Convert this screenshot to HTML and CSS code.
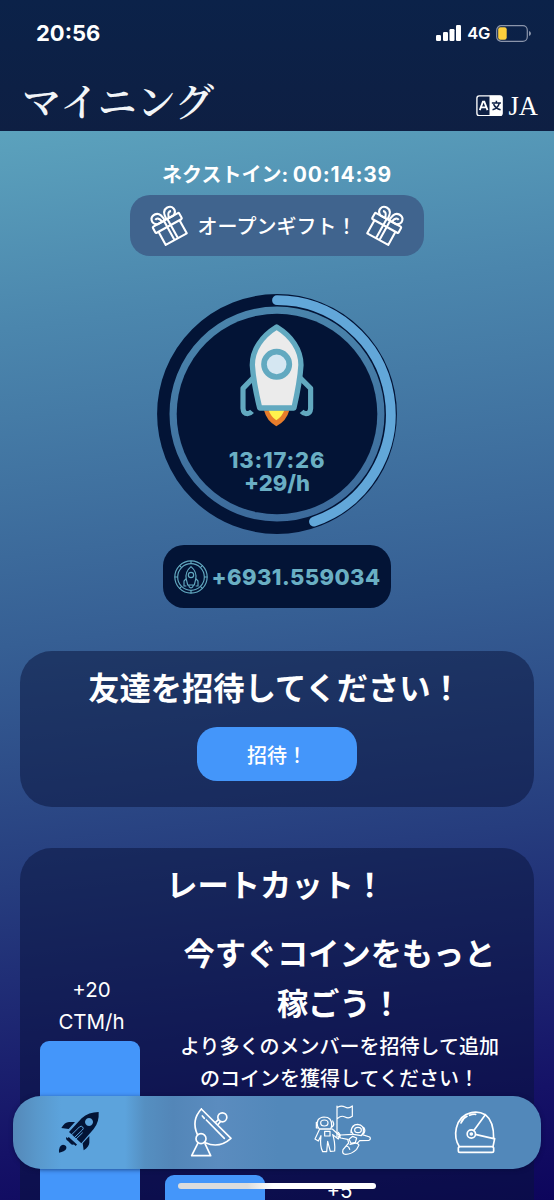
FILE: index.html
```html
<!DOCTYPE html>
<html lang="ja">
<head>
<meta charset="utf-8">
<title>マイニング</title>
<link rel="stylesheet" href="styles.css">
</head>
<body>
<div class="app">
  <header class="header">
    <div class="status">
      <span class="clock">20:56</span>
      <div class="status-right">
        <svg class="signal" viewBox="0 0 26 16"><rect x="0" y="10" width="5" height="6" rx="1.2"/><rect x="7" y="7" width="5" height="9" rx="1.2"/><rect x="13.500" y="4" width="5" height="12" rx="1.2"/><rect x="20" y="0" width="5" height="16" rx="1.2"/></svg>
        <span class="network">4G</span>
        <svg class="battery" viewBox="0 0 36 17"><rect x=".7" y=".7" width="30.600" height="15.600" rx="4.500" fill="none" stroke="#8b95ab" stroke-width="1.200"/><rect x="2.200" y="2.300" width="8.500" height="12.400" rx="2.200" fill="#fdcf3c"/><path d="M33 6q2 .8 2 2.500T33 11z" fill="#8b95ab"/></svg>
      </div>
    </div>
    <div class="titlebar">
      <h1 class="page-title">マイニング</h1>
      <div class="language">
        <svg class="language-icon" viewBox="0 0 80 64"><rect x="2.500" y="2.500" width="75" height="59" rx="7" fill="none" stroke="#fff" stroke-width="4"/><path d="M40 2h32q6 0 6 6v48q0 6-6 6H40z" fill="#fff"/><path d="M11 45l9.500-25h4L34 45M14.500 37h16" fill="none" stroke="#fff" stroke-width="5.500"/><path d="M47 24h27M60.500 17v7M69 25q-4 15-20 19M52 27q6 13 21 17" fill="none" stroke="#0d2046" stroke-width="4.500"/></svg>
        <span>JA</span>
      </div>
    </div>
  </header>

  <main class="content">
    <p class="countdown">ネクストイン: <span class="countdown-time">00:14:39</span></p>
    <button class="gift-button">
      <svg class="gift gift-left" viewBox="0 0 40 40"><g class="gift-lines"><rect x="5" y="13" width="30" height="7" rx="1"/><path d="M8 20v15h24V20M18 13v22M22 13v22M18 13H11C5 10 7 3 13 3c4 0 6 4 6 10M22 13h7c6-3 4-10-2-10-4 0-6 4-6 10M16 12c-1-4-3-5-5-4M24 12c1-4 3-5 5-4"/></g></svg>
      <span>オープンギフト！</span>
      <svg class="gift gift-right" viewBox="0 0 40 40"><g class="gift-lines"><rect x="5" y="13" width="30" height="7" rx="1"/><path d="M8 20v15h24V20M18 13v22M22 13v22M18 13H11C5 10 7 3 13 3c4 0 6 4 6 10M22 13h7c6-3 4-10-2-10-4 0-6 4-6 10M16 12c-1-4-3-5-5-4M24 12c1-4 3-5 5-4"/></g></svg>
    </button>

    <section class="dial">
      <svg class="dial-ring" viewBox="0 0 240 240">
        <circle cx="120" cy="120" r="113.700" fill="none" stroke="#031436" stroke-width="12.400"/>
        <circle cx="120" cy="120" r="100.300" fill="#031436"/>
        <path d="M120 6.200A113.800 113.800 0 0 1 157 227.600" fill="none" stroke="#62a7d9" stroke-width="9.800" stroke-linecap="round"/>
      </svg>
      <div class="dial-body">
        <svg class="rocket" viewBox="40 24 232 318">
          <path d="M118 286q8 32 37 48 31-16 39-48z" fill="#e87d2b"/>
          <path d="M132 286q7 20 23 30 17-10 24-30z" fill="#fff34d"/>
          <path d="M156 36C112 63 83 104 83 150q3 50 22 129h103q18-79 21-129c0-46-29-87-73-114z" fill="#ebebeb" stroke="#62a9c0" stroke-width="16" stroke-linejoin="round"/>
          <circle cx="156" cy="148" r="38" fill="#d5e7f2" stroke="#62a9c0" stroke-width="17"/>
          <path d="M87 187l-32 33v60q1 16 14 16 7 0 13-7M225 187l33 33v60q-1 16-14 16-7 0-13-7" fill="none" stroke="#62a9c0" stroke-width="15.500" stroke-linejoin="round"/>
        </svg>
        <span class="dial-time">13:17:26</span>
        <span class="dial-rate">+29/h</span>
      </div>
    </section>

    <div class="balance">
      <svg class="coin" viewBox="0 0 102 102"><g fill="none" stroke="#62a9c0" stroke-width="3.500"><circle cx="51" cy="51" r="48.500"/><circle cx="51" cy="51" r="40"/><path d="M51 2v9M51 91v9M2 51h9M91 51h9M16 16l7 7M79 79l7 7M86 16l-7 7M23 79l-7 7"/><path d="M51 20Q32 36 37 58l4 17h20l4-17q5-22-14-38zM44 76q1 6 7 8 6-2 7-8M38 54l-8 9v15h7M64 54l8 9v15h-7"/><circle cx="51" cy="45" r="8"/></g></svg>
      <span>+6931.559034</span>
    </div>

    <section class="card invite-card">
      <h2 class="card-title">友達を招待してください！</h2>
      <button class="invite-button">招待！</button>
    </section>

    <section class="card rate-card">
      <h2 class="card-title">レートカット！</h2>
      <div class="chart">
        <div class="bar-column first">
          <span class="bar-label">+20<br>CTM/h</span>
          <div class="bar"></div>
        </div>
        <div class="pitch">
          <h3 class="pitch-title">今すぐコインをもっと<br>稼ごう！</h3>
          <p class="pitch-text">より多くのメンバーを招待して追加<br>のコインを獲得してください！</p>
        </div>
        <div class="bar-column second"><div class="bar"></div></div>
        <div class="bar-column third"><span class="bar-label">+5</span></div>
      </div>
    </section>
  </main>

  <nav class="tabbar">
    <a class="tab"><svg class="tab-icon" viewBox="117 52 180 180" fill="#031436">
      <path fill-rule="evenodd" d="M266 79q2 31-15 51l-37 43-37-34 38-41q21-19 51-19zm-29 18a12 12 0 1 0 .1 0z"/>
      <path d="M154 127q10-18 23-18h18l-19 21zM221 194q17-12 17-23v-20l-20 22z"/>
      <path d="M169 154q-3 8 5 12l8 8q4 5 11 2M147 201q-1-22 12-24 14 2 9 14-4 7-21 10z"/>
      <path d="M183 149l25-25q6-5 10 0t-1 9l-27 26M193 165l25-24" fill="none" stroke="#5ba3dc" stroke-width="3"/>
      <path d="M174 156l25 23" fill="none" stroke="#031436" stroke-width="6"/>
    </svg></a>
    <a class="tab"><svg class="tab-icon line" viewBox="513 52 180 180" stroke-width="5">
      <path d="M574 70l89 88q-36 32-77 13M562 146q-19-42 12-76M577 91l6 7M589 103l54 55M616 111l10-10M623 118l9-11"/>
      <circle cx="637" cy="95" r="13.500"/><circle cx="573" cy="159" r="15"/>
      <path d="M563 174l-18 36h57l-17-36"/>
    </svg></a>
    <a class="tab"><svg class="tab-icon line" viewBox="99 52 180 180" stroke-width="3.600">
      <path d="M171 61v92M173 65q11-7 22-1t22-3v31q-11 8-22 2t-22 4"/>
      <path d="M113 122q-6-26 19-28 25 0 23 27l-3 9h-34zM109 110v17h6M158 106q7 12-2 18"/><ellipse cx="133" cy="112" rx="11" ry="9"/>
      <path d="M119 130l-14 30 10 6 8-16q-4 32 5 48h12l3-31 8 30 13-1q2-27-6-49l17 13 5-9-23-21zM134 137h16v14h-16zM175 140l5 7-5 7"/>
      <path d="M214 137q0-21 19-21 20 2 17 24l-6 10-24-4zM222 120q-10 8-9 21M251 125q7 10 0 19"/><ellipse cx="234" cy="133" rx="10" ry="8"/>
      <path d="M217 146l-35 2q-6 4 0 9l21 4 3 11-17 20q-4 14 8 14 17 0 33-15l7-13q-5-8-14-5l-13 3M247 147l22 7q5 6-2 10l-28 1-8 9M207 161l11-9 12 5-4 13-13 3zM199 181q8 1 10 10"/>
    </svg></a>
    <a class="tab"><svg class="tab-icon line" viewBox="495 52 180 180" stroke-width="5">
      <path d="M538 183q-16-25-9-56 10-39 45-46 22-5 42 6l-35 48M616 87q26 20 25 72l-52-12M641 159h3l-5 24M543 112q5-14 18-20M569 89q8-4 18-3"/>
      <circle cx="574" cy="145" r="12.500"/><circle cx="574" cy="145" r="3"/>
      <rect x="535" y="183" width="106" height="17" rx="5"/>
    </svg></a>
  </nav>
  <div class="home-indicator"></div>
</div>
</body>
</html>
```
FILE: styles.css
```css
* { box-sizing: border-box; margin: 0; padding: 0; }
body {
  width: 554px;
  height: 1200px;
  overflow: hidden;
  color: #fff;
  font-family: Inter, "Noto Sans CJK JP", sans-serif;
}
button { border: 0; color: inherit; font: inherit; }
.app {
  position: relative;
  height: 1200px;
  overflow: hidden;
  background: linear-gradient(173deg, #5ea6bf 8%, #4b86ad 26%, #365f94 51%, #263d7e 70%, #151267 91%, #0d055c 100%);
}
.header {
  height: 131px;
  background: linear-gradient(#0b2249, #0e1f43);
}
.status {
  display: flex;
  justify-content: space-between;
  align-items: center;
  height: 66px;
  padding: 0 22px 0 36px;
}
.clock { font-size: 22px; font-weight: 700; }
.status-right { display: flex; align-items: center; }
.signal { width: 26px; height: 16px; fill: #fff; }
.network { margin: 0 6px 0 5px; font-size: 16.5px; font-weight: 600; letter-spacing: -.3px; }
.battery { width: 36px; height: 17px; }
.titlebar {
  display: flex;
  justify-content: space-between;
  align-items: center;
  height: 65px;
  padding: 14px 16px 0 22px;
}
.page-title {
  font: 600 39px/50px "Noto Serif CJK JP", "Noto Sans CJK JP", serif;
  color: #f2f5f8;
  margin-top: -14px;
}
.language {
  display: flex;
  align-items: center;
  gap: 6px;
  font: 26.5px/30px "Liberation Serif", serif;
}
.language-icon { width: 27px; height: 21.5px; }
.content {
  display: flex;
  flex-direction: column;
  align-items: center;
  padding: 32px 20px 0;
}
.countdown { height: 32px; font-size: 20px; line-height: 24px; font-weight: 700; white-space: nowrap; }
.countdown-time { font-size: 21px; letter-spacing: .8px; }
.gift-button {
  display: flex;
  align-items: center;
  justify-content: center;
  gap: 9px;
  width: 294px;
  height: 61px;
  border-radius: 20px;
  background: #40648e;
  font-size: 20px;
  font-weight: 500;
}
.gift { width: 40px; height: 40px; }
.gift-lines { fill: none; stroke: #fff; stroke-width: 2.1; stroke-linejoin: round; }
.gift-left { transform: rotate(-29deg); }
.gift-right { transform: rotate(29deg); }
.dial {
  display: grid;
  width: 240px;
  height: 240px;
  margin-top: 38px;
}
.dial-ring, .dial-body { grid-area: 1 / 1; }
.dial-body {
  display: flex;
  flex-direction: column;
  align-items: center;
  padding-top: 29px;
  color: #6aafc4;
  font-size: 22px;
  line-height: 23px;
  font-weight: 800;
}
.dial-time { letter-spacing: .8px; }
.rocket { width: 77.300px; height: 106px; margin-bottom: 20px; flex: none; }
.balance {
  display: flex;
  align-items: center;
  justify-content: center;
  gap: 4px;
  width: 228px;
  height: 63px;
  margin-top: 11px;
  border-radius: 21px;
  background: #031436;
  color: #6aafc4;
  font-size: 22px;
  font-weight: 800;
  letter-spacing: .4px;
}
.coin { width: 34px; height: 34px; flex: none; }
.card {
  width: 514px;
  border-radius: 32px;
  background: rgba(7, 18, 58, .5);
}
.invite-card {
  display: flex;
  flex-direction: column;
  align-items: center;
  height: 156px;
  margin-top: 43px;
  padding-top: 14px;
}
.card-title { font-size: 31.3px; line-height: 48px; font-weight: 700; text-align: center; }
.invite-card .card-title { margin-left: -4px; }
.invite-button {
  width: 160px;
  height: 54px;
  margin-top: 14px;
  border-radius: 20px;
  background: #4496fa;
  font-size: 20px;
  font-weight: 500;
}
.rate-card { height: 500px; margin-top: 41px; padding: 14px 19px 0 19.5px; }
.rate-card .card-title { padding-right: 3px; }
.chart {
  display: grid;
  grid-template-columns: repeat(4, 100px);
  grid-template-rows: 245px 200px;
  column-gap: 25px;
  padding-top: 20px;
}
.bar-column { display: flex; flex-direction: column; }
.bar-label { font-size: 20.5px; line-height: 32px; text-align: center; }
.bar { flex: 1; border-radius: 9px 9px 0 0; background: #4496fa; }
.first { grid-area: 1 / 1 / 3 / 2; padding-top: 44px; }
.first .bar { margin-top: 3px; }
.first .bar-label { padding-left: 4px; }
.pitch { grid-area: 1 / 2 / 2 / 5; text-align: center; }
.pitch-title { font-size: 31.2px; line-height: 49.5px; font-weight: 700; white-space: nowrap; }
.pitch-text { margin-top: 2px; font-size: 20px; line-height: 32px; font-weight: 500; white-space: nowrap; }
.second { grid-area: 2 / 2; }
.third { grid-area: 2 / 3; }
.tabbar {
  position: absolute;
  left: 13px;
  top: 1096px;
  display: grid;
  grid-template-columns: repeat(4, 1fr);
  width: 528px;
  height: 73px;
  border-radius: 28px;
  background: linear-gradient(90deg, #5488b8 0, #5998cb 24px, #5ca3dc 48px, #5ca3dc 112px, #558fc1 132px, #5386b8 160px, #5b8cbf 205px, #5288ba 265px, #5288ba 100%);
  box-shadow: 0 1px 4px rgba(0, 10, 50, .5);
}
.tab { display: grid; place-items: center; }
.tab-icon { width: 60px; height: 60px; }
.line { fill: none; stroke: #fff; stroke-linecap: round; stroke-linejoin: round; }
.home-indicator {
  position: absolute;
  left: 178px;
  top: 1183px;
  width: 198px;
  height: 6px;
  border-radius: 3px;
  background: linear-gradient(90deg, #dcdcdc 35%, #fff 48%);
}
```
